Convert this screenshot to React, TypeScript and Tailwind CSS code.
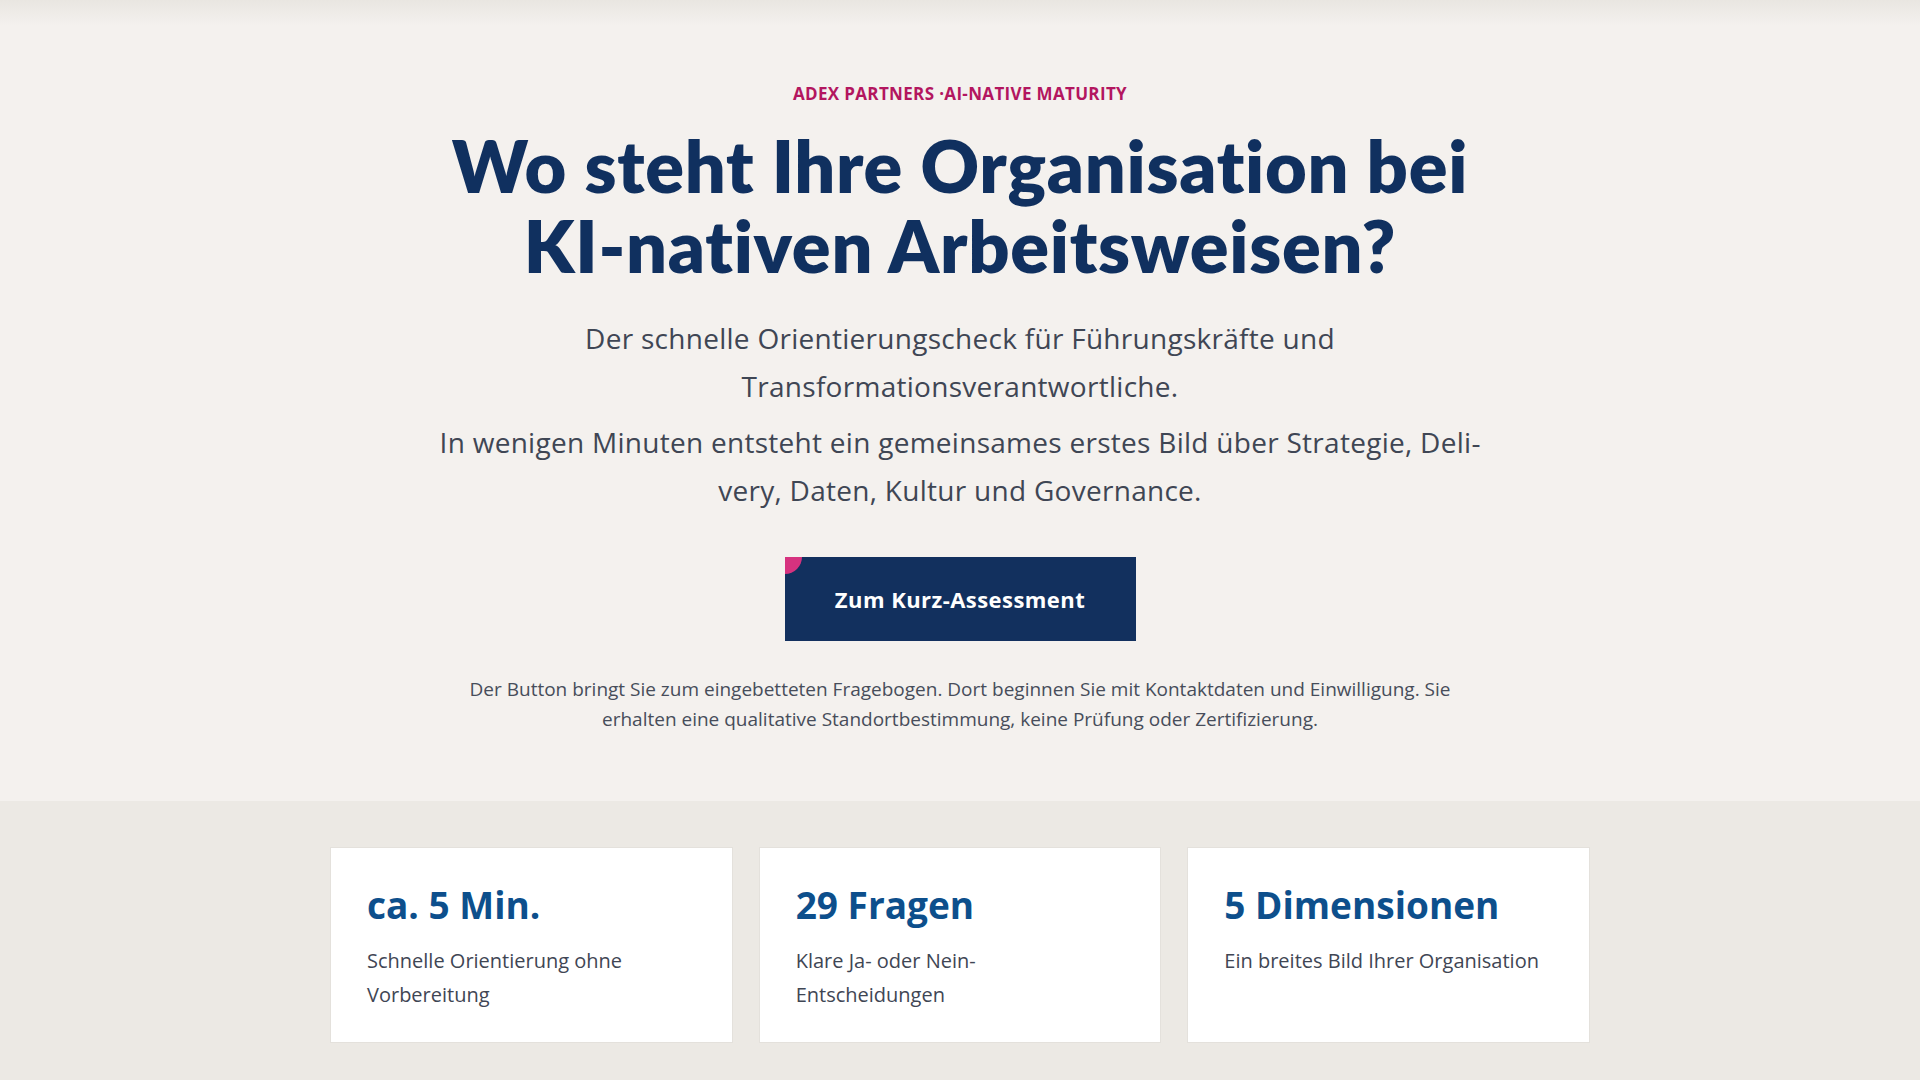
import React from 'react';

const stats = [
  { value: 'ca. 5 Min.', text: 'Schnelle Orientierung ohne Vorbereitung' },
  { value: '29 Fragen', text: 'Klare Ja- oder Nein-Entscheidungen' },
  { value: '5 Dimensionen', text: 'Ein breites Bild Ihrer Organisation' },
];

export default function App() {
  return (
    <div className="min-h-screen bg-[#ece9e4] font-['Open_Sans','Liberation_Sans',sans-serif]" lang="de">
      {/* Hero */}
      <section className="relative bg-[#f4f1ee] pt-[82px] pb-[67px]">
        <div className="absolute inset-x-0 top-0 h-[26px] bg-gradient-to-b from-[#e9e6e1] to-[#f4f1ee]"></div>
        <div className="relative max-w-[1100px] mx-auto px-4 text-center">
          <p className="text-[17px] leading-6 font-bold tracking-[0.02em] text-[#b3165f]">
            ADEX PARTNERS ·AI-NATIVE MATURITY
          </p>
          <h1 className="mt-[19px] font-['Lato','Liberation_Sans',sans-serif] text-[72px] leading-[80px] font-extrabold tracking-[0.01em] text-[#10305f]">
            Wo steht Ihre Organisation bei
            <br />
            KI-nativen Arbeitsweisen?
          </h1>
          <p className="mt-[29px] text-[28px] leading-[48px] tracking-[0.01em] text-[#3f4654] max-w-[820px] mx-auto">
            Der schnelle Orientierungscheck für Führungskräfte und Transformationsverantwortliche.
          </p>
          <p className="mt-2 text-[28px] leading-[48px] tracking-[0.01em] text-[#3f4654] max-w-[1060px] mx-auto">
            In wenigen Minuten entsteht ein gemeinsames erstes Bild über Strategie, Deli&shy;very, Daten, Kultur und Governance.
          </p>
          <div className="mt-[43px] flex justify-center">
            <a
              href="#assessment"
              className="relative overflow-hidden inline-flex items-center justify-center w-[351px] h-[84px] bg-[#12305e] text-white text-[22px] font-bold tracking-[0.02em]"
            >
              <span className="absolute -left-[17px] -top-[17px] w-[34px] h-[34px] rounded-full bg-[#d6327f]"></span>
              Zum Kurz-Assessment
            </a>
          </div>
          <p className="mt-[33px] max-w-[990px] mx-auto text-[19px] leading-[30px] text-[#474d5a]">
            Der Button bringt Sie zum eingebetteten Fragebogen. Dort beginnen Sie mit Kontaktdaten und Einwilligung. Sie erhalten eine qualitative Standortbestimmung, keine Prüfung oder Zertifizierung.
          </p>
        </div>
      </section>

      {/* Eckdaten */}
      <section className="pt-[46px] pb-10">
        <div className="max-w-[1260px] mx-auto grid grid-cols-3 gap-[26px]">
          {stats.map((s) => (
            <div key={s.value} className="bg-white border border-[#e4e1dc] px-9 pt-[35px] pb-[30px] min-h-[195px]">
              <h3 className="text-[37px] leading-[44px] font-bold text-[#0d4f8c]">{s.value}</h3>
              <p className="mt-[17px] max-w-[320px] text-[20px] leading-[34px] text-[#3f4654]">{s.text}</p>
            </div>
          ))}
        </div>
      </section>
    </div>
  );
}
